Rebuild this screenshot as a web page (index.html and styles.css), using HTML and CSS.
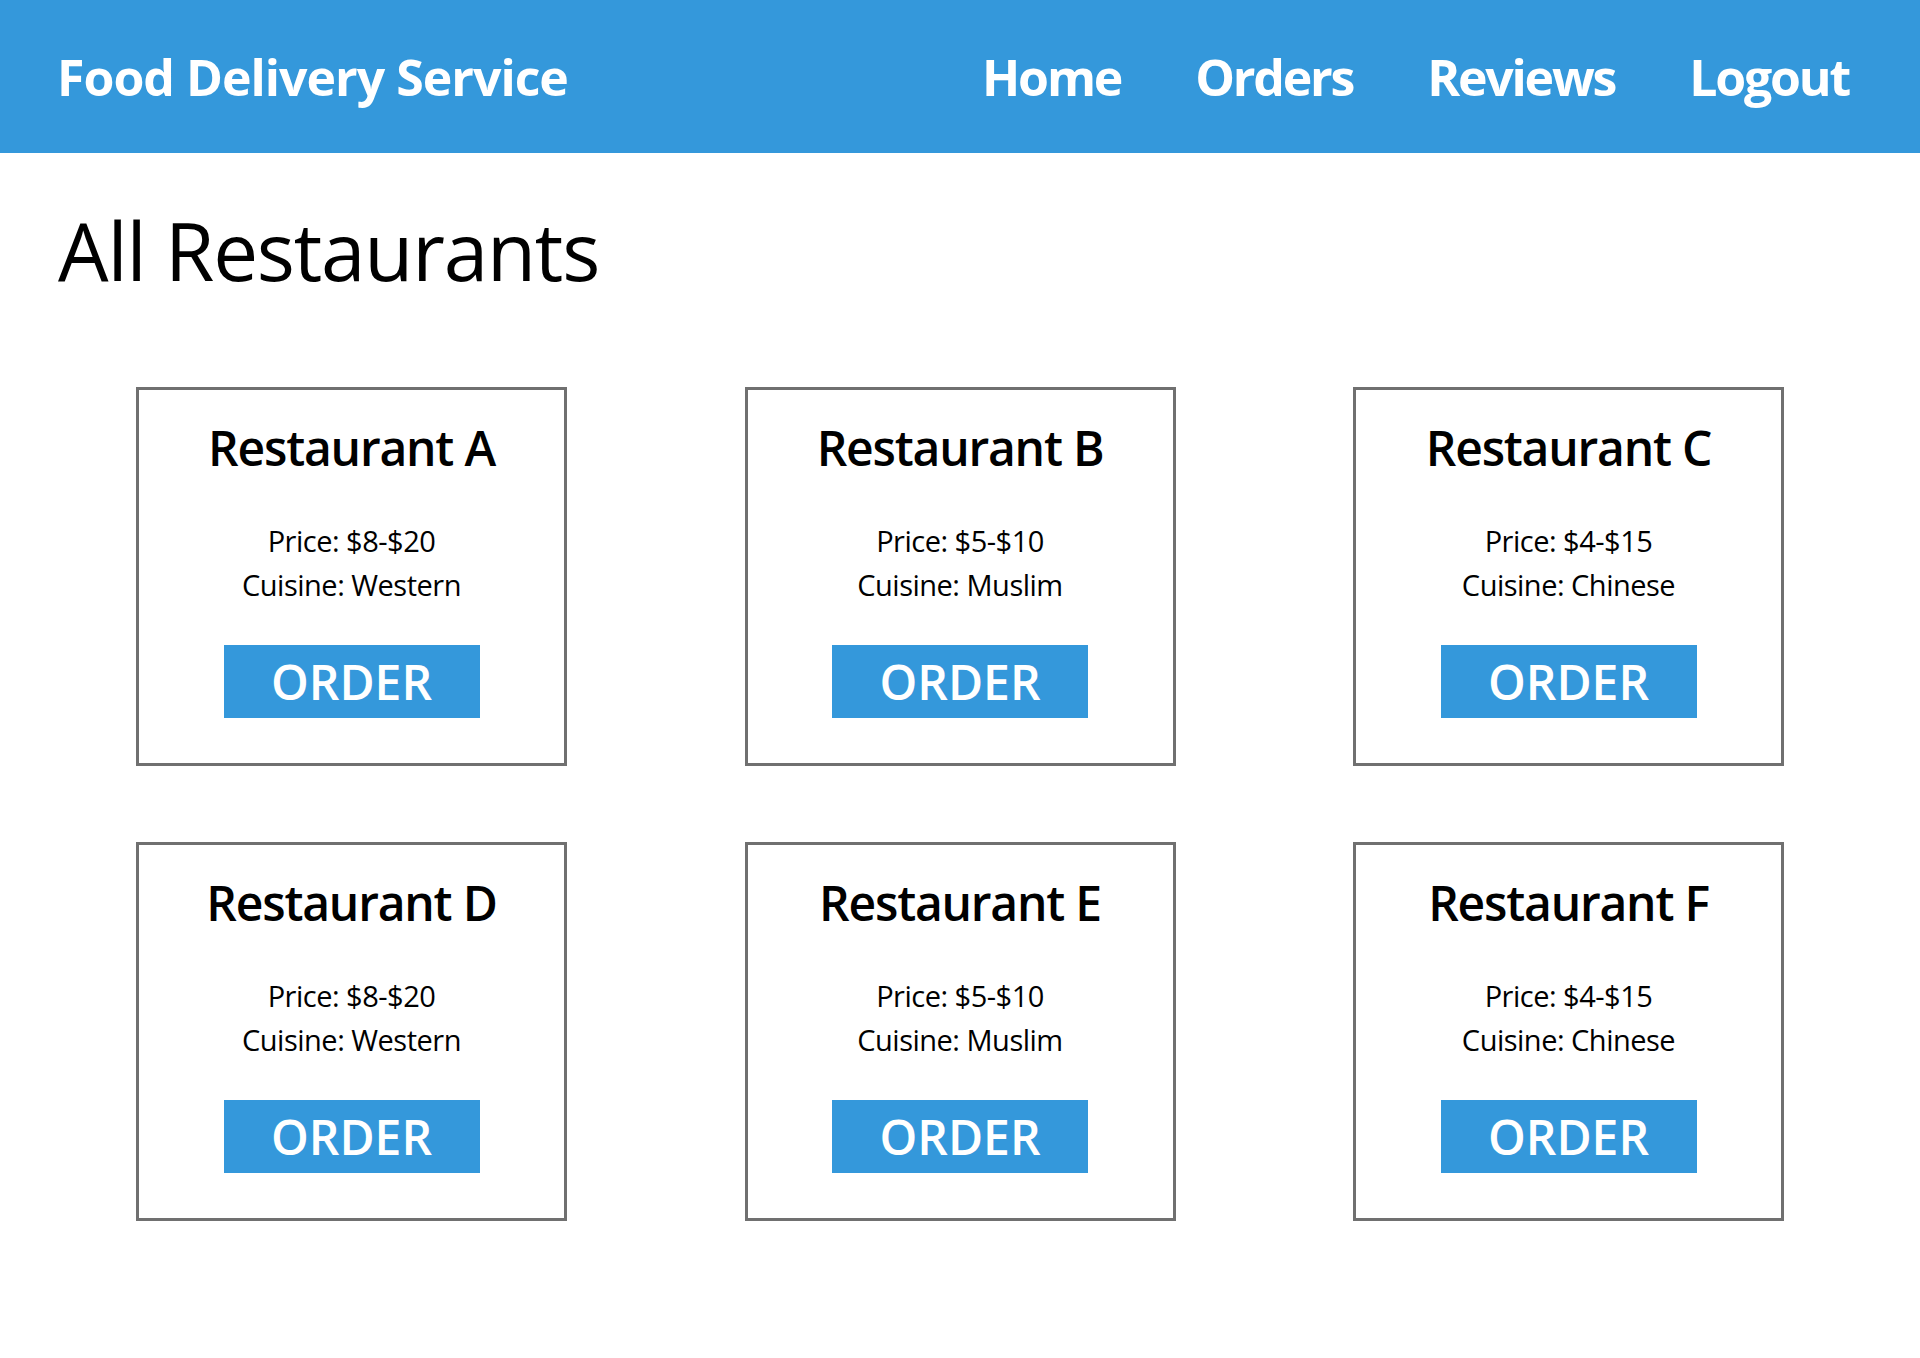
FILE: index.html
```html
<!DOCTYPE html>
<html lang="en">
<head>
<meta charset="utf-8">
<title>Food Delivery Service</title>
<link rel="stylesheet" href="styles.css">
</head>
<body>
<header class="topbar">
  <div class="brand">Food Delivery Service</div>
  <nav class="nav">
    <a class="nav-link" href="#">Home</a>
    <a class="nav-link" href="#">Orders</a>
    <a class="nav-link" href="#">Reviews</a>
    <a class="nav-link" href="#">Logout</a>
  </nav>
</header>
<main class="content">
  <h1 class="page-title">All Restaurants</h1>
  <section class="grid">
    <div class="card">
      <h2 class="card-title">Restaurant A</h2>
      <p class="card-info">Price: $8-$20<br>Cuisine: Western</p>
      <a class="order-btn" href="#">ORDER</a>
    </div>
    <div class="card">
      <h2 class="card-title">Restaurant B</h2>
      <p class="card-info">Price: $5-$10<br>Cuisine: Muslim</p>
      <a class="order-btn" href="#">ORDER</a>
    </div>
    <div class="card">
      <h2 class="card-title">Restaurant C</h2>
      <p class="card-info">Price: $4-$15<br>Cuisine: Chinese</p>
      <a class="order-btn" href="#">ORDER</a>
    </div>
    <div class="card">
      <h2 class="card-title">Restaurant D</h2>
      <p class="card-info">Price: $8-$20<br>Cuisine: Western</p>
      <a class="order-btn" href="#">ORDER</a>
    </div>
    <div class="card">
      <h2 class="card-title">Restaurant E</h2>
      <p class="card-info">Price: $5-$10<br>Cuisine: Muslim</p>
      <a class="order-btn" href="#">ORDER</a>
    </div>
    <div class="card">
      <h2 class="card-title">Restaurant F</h2>
      <p class="card-info">Price: $4-$15<br>Cuisine: Chinese</p>
      <a class="order-btn" href="#">ORDER</a>
    </div>
  </section>
</main>
</body>
</html>
```
FILE: styles.css
```css
* { box-sizing: border-box; }
html, body { margin: 0; padding: 0; background: #fff; }
body {
  font-family: "Open Sans", "Noto Sans", sans-serif;
  color: #000;
}
.topbar {
  height: 153px;
  background: #3498db;
  display: flex;
  align-items: center;
  justify-content: space-between;
  padding: 0 71px 0 57px;
}
.brand {
  color: #fff;
  font-weight: 700;
  font-size: 50px;
  letter-spacing: -1px;
  line-height: 1;
}
.nav {
  display: flex;
  gap: 74px;
}
.nav-link {
  color: #fff;
  text-decoration: none;
  font-weight: 700;
  font-size: 50px;
  letter-spacing: -2.2px;
  line-height: 1;
}
.content {
  padding: 49px 136px 60px;
}
.page-title {
  margin: 0 0 89px -78px;
  font-size: 80px;
  line-height: 96px;
  font-weight: 400;
  letter-spacing: -1.2px;
}
.grid {
  display: grid;
  grid-template-columns: repeat(3, 431px);
  justify-content: space-between;
  row-gap: 76px;
}
.card {
  border: 3px solid #707070;
  height: 379px;
  padding-top: 28px;
  display: flex;
  flex-direction: column;
  align-items: center;
  text-align: center;
}
.card-title {
  margin: 0;
  font-size: 48px;
  line-height: 60px;
  font-weight: 600;
  letter-spacing: -1.2px;
}
.card-info {
  margin: 41px 0 38px;
  font-size: 29px;
  line-height: 44px;
  letter-spacing: -0.5px;
}
.order-btn {
  width: 256px;
  height: 73px;
  background: #3498db;
  color: #fff;
  text-decoration: none;
  font-size: 48px;
  font-weight: 600;
  display: flex;
  align-items: center;
  justify-content: center;
  line-height: 1;
}
```
